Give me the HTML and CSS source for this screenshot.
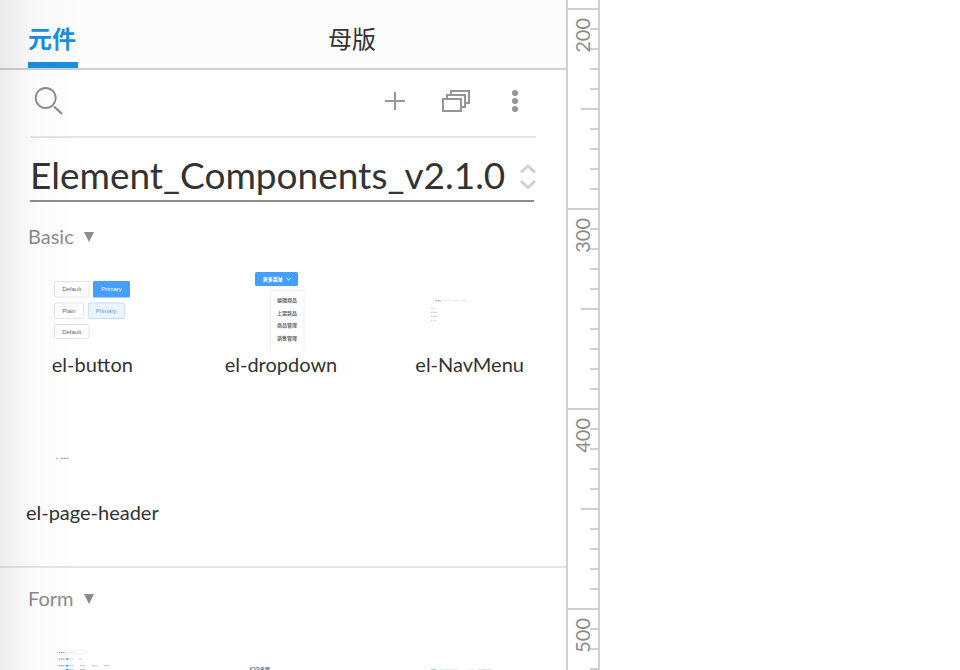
FILE: index.html
```html
<!DOCTYPE html>
<html lang="zh-CN">
<head>
<meta charset="utf-8">
<meta name="viewport" content="width=device-width, initial-scale=1">
<title>元件</title>
<link rel="stylesheet" href="styles.css">
</head>
<body>
<div class="app">
  <aside class="panel">
    <nav class="tabs" role="tablist">
      <button class="tab tab-active" role="tab" aria-selected="true">元件</button>
      <button class="tab" role="tab" aria-selected="false">母版</button>
    </nav>
    <div class="library">
      <div class="toolbar">
        <label class="search">
          <svg width="30" height="30" viewBox="0 0 30 30" fill="none" stroke="#8c8c8c" stroke-width="1.800"><circle cx="11.700" cy="12" r="10"/><path d="M20 20.500 28 28" stroke-width="2.200"/></svg>
          <input type="search" aria-label="搜索">
        </label>
        <button class="tool" aria-label="添加"><svg width="30" height="30" viewBox="0 0 30 30" fill="none" stroke="#969696" stroke-width="2"><path d="M5 15H25M15 6V24"/></svg></button>
        <button class="tool" aria-label="元件库"><svg width="30" height="30" viewBox="0 0 30 30" fill="none" stroke="#969696" stroke-width="2"><path d="M3 13H21V25H3ZM7 13V9H25V21H21M11 9V5H29V17H25"/></svg></button>
        <button class="tool" aria-label="更多"><svg width="30" height="30" viewBox="0 0 30 30" fill="#969696"><circle cx="15" cy="7" r="3"/><circle cx="15" cy="15" r="3"/><circle cx="15" cy="23" r="3"/></svg></button>
      </div>
      <div class="picker">
        <select class="picker-select" aria-label="元件库名称"><option>Element_Components_v2.1.0</option></select>
        <svg class="picker-arrows" width="18" height="28" viewBox="0 0 18 28" fill="none" stroke="#d0d0d0" stroke-width="3"><path d="M2 10.500 9 4 16 10.500M2 19 9 25.500 16 19"/></svg>
      </div>
    </div>

    <section class="group">
      <h2 class="group-title"><span class="group-name">Basic</span><svg class="caret" width="10" height="10" viewBox="0 0 10 10"><path d="M0 0H10L5 10Z" fill="#8c8c8c"/></svg></h2>
      <ul class="items">
        <li class="item">
          <svg class="thumb" viewBox="0 0 76 76">
            <g fill="#fff" stroke="#e3e5ea"><rect x=".5" y="9.500" width="34.500" height="15.500" rx="1"/><rect x=".5" y="31" width="29" height="15.500" rx="1"/><rect x=".5" y="52.500" width="34.500" height="14" rx="1"/></g>
            <rect x="39" y="9" width="37" height="16.500" rx="1.500" fill="#469eff"/>
            <rect x="34.300" y="31" width="36" height="15.500" rx="1" fill="#ecf5ff" stroke="#c0dfff"/>
            <g class="tiny" fill="#66696f"><text x="17.700" y="19.200">Default</text><text x="15" y="40.700">Plain</text><text x="17.700" y="61.500">Default</text><text x="57.500" y="19.200" fill="#fff">Primary</text><text x="52" y="40.700" fill="#469eff">Primary</text></g>
          </svg>
          <span class="item-name">el-button</span>
        </li>
        <li class="item">
          <svg class="thumb" viewBox="0 0 76 76">
            <rect x="12" y="0" width="43" height="14" rx="1.500" fill="#469eff"/>
            <path d="M43.500 6 45.700 8 48 6" fill="none" stroke="#fff" stroke-width=".8"/>
            <path d="M27.500 76V18.500H43L45 16.500 47 18.500H61V76" fill="#fff" stroke="#eeeff1"/>
            <g class="tiny tiny-cjk" fill="#66696f"><text x="29.800" y="9" fill="#fff">更多菜单</text><text x="44" y="30">编辑商品</text><text x="44" y="42.700">上架新品</text><text x="44" y="55.400">商品管理</text><text x="44" y="68">销售管理</text></g>
          </svg>
          <span class="item-name">el-dropdown</span>
        </li>
        <li class="item">
          <svg class="thumb" viewBox="0 0 76 76" fill="none">
            <path d="M1 29.500H76" stroke="#fafafa" stroke-width=".6"/><path d="M3 29.900H11" stroke="#c4dffb" stroke-width=".8"/>
            <path d="M3 28.500H9" stroke="#a9abb0" stroke-dasharray="1 .5"/>
            <path d="M12 28.500H18M20.500 28.500H26.500M29 28.500H35" stroke="#dcdde0" stroke-dasharray="1 .5"/>
            <path d="M-1 36.300H5" stroke="#c0dcf8" stroke-dasharray="1 .5"/>
            <path d="M-1 40.300H5M-1 44.300H5" stroke="#b0b2b6" stroke-dasharray="1 .5"/><path d="M-1 48.300H5" stroke="#cccdd0" stroke-dasharray="1 .5"/>
            <path d="M15.500 33V50" stroke="#fafafa" stroke-width=".6"/>
          </svg>
          <span class="item-name">el-NavMenu</span>
        </li>
        <li class="item">
          <svg class="thumb" viewBox="0 0 76 76" fill="none">
            <path d="M2 38.300H4" stroke="#b5b6b9"/><path d="M7 38.300H14.500" stroke="#85878b" stroke-dasharray="1.200 .3"/>
          </svg>
          <span class="item-name">el-page-header</span>
        </li>
      </ul>
    </section>

    <section class="group">
      <h2 class="group-title"><span class="group-name">Form</span><svg class="caret" width="10" height="10" viewBox="0 0 10 10"><path d="M0 0H10L5 10Z" fill="#8c8c8c"/></svg></h2>
      <ul class="items">
        <li class="item">
          <svg class="thumb" viewBox="0 0 76 76" fill="none">
            <path d="M3 18.500H4.500M3 25H4.500M3 31.700H4.500" stroke="#f5a9ad"/>
            <path d="M5 18.500H11M5 25H11M5 31.700H11" stroke="#9b9da2" stroke-dasharray="1.500 .3"/>
            <rect x="12" y="16.500" width="19.500" height="4" stroke="#eceef1" stroke-width=".6"/><path d="M14 18.500H21" stroke="#dadce0" stroke-dasharray="1 .5"/>
            <path d="M12 25H14M12 31.700H14M12 35.500H14" stroke="#3f98f8" stroke-width="1.500"/>
            <path d="M14 25H19M14 31.700H20M14 35.500H20" stroke="#a6cdf7" stroke-dasharray="1.500 .3"/>
            <path d="M25 25H28M26 31.700H31.500M38 31.700H43.500M50 31.700H56M26 35.500H31.500" stroke="#b8babe" stroke-dasharray="1.500 .3"/>
          </svg>
        </li>
        <li class="item">
          <svg class="thumb" viewBox="0 0 76 76">
            <rect x="7" y="34" width="1.500" height="1.500" fill="#f56c6c"/>
            <text class="tiny tiny-cjk" x="17" y="37" fill="#66696f">门店名称</text>
          </svg>
        </li>
        <li class="item">
          <svg class="thumb" viewBox="0 0 76 76" fill="none">
            <path d="M-1 35.500H4" stroke="#a5cbf2"/><path d="M8 35.500H26" stroke="#dcebf9" stroke-dasharray="4 .8"/><path d="M37 35.500H42" stroke="#eee"/><path d="M46 35.500H60" stroke="#e0e0e2" stroke-dasharray="4 .8"/>
          </svg>
        </li>
      </ul>
    </section>
  </aside>
  <div class="ruler">
    <div class="segment"><span class="mark">200</span></div>
    <div class="segment"><span class="mark">300</span></div>
    <div class="segment"><span class="mark">400</span></div>
    <div class="segment"><span class="mark">500</span></div>
  </div>
  <main class="canvas"></main>
</div>
</body>
</html>
```

FILE: styles.css
```css
* {
  box-sizing: border-box;
}

body {
  margin: 0;
  background: #fff;
  color: #333;
  font-family: Lato, "Noto Sans CJK SC", sans-serif;
  font-size: 20px;
}

button,
input,
select {
  margin: 0;
  padding: 0;
  border: 0;
  background: none;
  color: inherit;
  font: inherit;
}

.app {
  display: grid;
  grid-template-columns: 568px 32px 1fr;
  height: 100vh;
  overflow: hidden;
}

.panel {
  position: relative;
  overflow: hidden;
  border-right: 2px solid #d0d0d0;
}

/* soft shade along the window edge */
.panel::after {
  content: "";
  position: absolute;
  inset: 0 auto 0 0;
  width: 80px;
  background: linear-gradient(to right, rgba(0, 0, 0, .07), rgba(0, 0, 0, .02) 40%, transparent);
  pointer-events: none;
}

.tabs {
  display: flex;
  gap: 250px;
  height: 70px;
  padding-left: 28px;
  border-bottom: 2px solid #d0d0d0;
  background: #fcfcfc;
}

.tab {
  width: 50px;
  padding-top: 14px;
  border-bottom: 6px solid transparent;
  font-family: "Noto Sans CJK SC", sans-serif;
  font-size: 24px;
  line-height: 28px;
  text-align: left;
}

.tab-active {
  border-color: #1890dc;
  color: #1890dc;
  font-weight: 700;
}

.library {
  margin: 0 30px 4px;
}

.toolbar {
  display: flex;
  align-items: center;
  gap: 30px;
  height: 68px;
  padding: 0 6px 4px 4px;
  border-bottom: 2px solid #e6e6e6;
}

.search {
  display: flex;
  flex: 1;
  min-width: 0;
}

.search input {
  flex: 1;
  min-width: 0;
  outline: 0;
}

.tool {
  display: flex;
}

.toolbar svg {
  flex: none;
}

.picker {
  display: flex;
  align-items: center;
  height: 64px;
  padding-top: 14px;
  margin-right: 2px;
  border-bottom: 2px solid #8c8c8c;
}

.picker-select {
  flex: 1;
  min-width: 0;
  padding-bottom: 2px;
  appearance: none;
  font-size: 37px;
  line-height: 46px;
}

.picker-arrows {
  flex: none;
  margin-right: -3px;
}

.group {
  padding: 18px 0 40px;
  border-bottom: 2px solid #e6e6e6;
}

.group-title {
  display: flex;
  align-items: center;
  gap: 8px;
  margin: 0 28px 24px;
  color: #8c8c8c;
  font-size: 20px;
  font-weight: 400;
  line-height: 24px;
}

.group-name {
  min-width: 48px;
}

.caret {
  margin-top: 2px;
}

.items {
  display: grid;
  grid-template-columns: repeat(3, 1fr);
  row-gap: 44px;
  margin: 0 2px 2px -2px;
  padding: 0;
  list-style: none;
}

.item {
  display: flex;
  flex-direction: column;
  align-items: center;
  gap: 4px;
}

.thumb {
  width: 76px;
  height: 76px;
  overflow: visible;
}

.item-name {
  line-height: 24px;
}

.tiny {
  font-family: "Liberation Sans", sans-serif;
  font-size: 6px;
  text-anchor: middle;
}

.tiny-cjk {
  font-family: "Noto Sans CJK SC", sans-serif;
  font-size: 5px;
  font-weight: 700;
}

.ruler {
  padding-top: 8px;
  overflow: hidden;
  border-right: 2px solid #d0d0d0;
}

.segment {
  height: 200px;
  padding: 8px 0 0 2px;
  border-top: 2px solid #d0d0d0;
  background:
    linear-gradient(#d0d0d0, #d0d0d0) right 98px / 17px 2px no-repeat,
    repeating-linear-gradient(transparent 0 18px, #d0d0d0 18px 20px) right top / 8px 100% no-repeat;
}

.mark {
  display: block;
  color: #8c8c8c;
  line-height: 24px;
  writing-mode: vertical-rl;
  transform: rotate(180deg);
  text-align: right;
}

.canvas {
  background: #fff;
}
```
